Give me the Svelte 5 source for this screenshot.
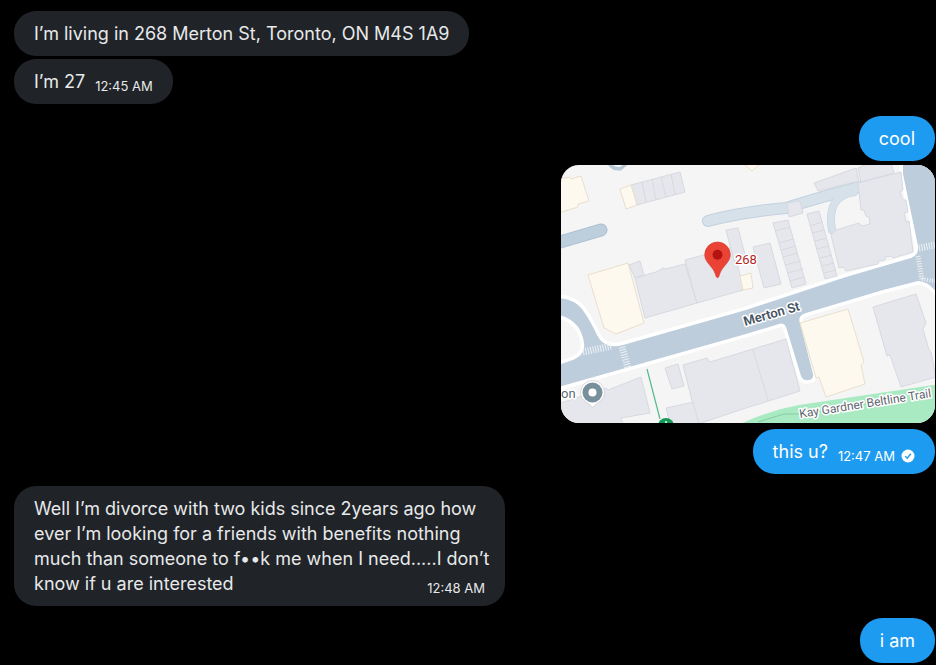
<script lang="ts">
  interface Message {
    id: number;
    from: 'me' | 'them';
    text?: string;
    map?: boolean;
    time?: string;
    sent?: boolean;
    long?: boolean;
  }

  const messages: Message[] = [
    { id: 1, from: 'them', text: 'I’m living in 268 Merton St, Toronto, ON M4S 1A9' },
    { id: 2, from: 'them', text: 'I’m 27', time: '12:45 AM' },
    { id: 3, from: 'me', text: 'cool' },
    { id: 4, from: 'me', map: true },
    { id: 5, from: 'me', text: 'this u?', time: '12:47 AM', sent: true },
    {
      id: 6,
      from: 'them',
      text: 'Well I’m divorce with two kids since 2years ago how ever I’m looking for a friends with benefits nothing much than someone to f••k me when I need.....I don’t know if u are interested',
      time: '12:48 AM',
      long: true,
    },
    { id: 7, from: 'me', text: 'i am' },
  ];

  const grey = [
    'M631 185 680 172 685 192 637 205Z M642 182l4 20 M652 179l4 21 M661 177l5 20 M671 174l4 20',
    'M629 265 640 261 644 275 635 278Z',
    'M635 278 656 272 663 268 666 269 685 264 697 303 645 318Z',
    'M685 260 733 247 740 275 743 290 697 303Z',
    'M726 230 738 228 747 262 735 265Z',
    'M753 247 770 243 781 284 764 288Z',
    'M773 223 788 220 806 284 792 288Z M775 231l15-4 M779 243l14-4 M781 250l15-4 M783 257l15-4 M785 265l16-4 M787 273l16-4 M790 281l14-4',
    'M807 214 819 211 837 276 825 279Z M810 226l12-4 M812 233l12-3 M815 241l12-3 M817 249l12-3 M820 258l12-3 M822 266l12-3 M824 273l12-3',
    'M787 203 800 201 803 213 789 217Z',
    'M814 183 856 168 859 181 818 191Z',
    'M858 168 870 163 891 163 894 173 861 182Z',
    'M858 183 901 172 903 190 900 192 903 200 906 200 908 212 904 213 906 222 909 221 913 252 893 258 891 256 885 257 885 260 878 261 878 264 846 271 843 267 839 268 831 235 836 230 859 223 862 226 870 224 869 217 866 216 864 210 861 210Z',
    'M665 368 678 364 684 386 672 389Z',
    'M683 365 707 358 710 362 786 339 800 391 746 408 698 424Z M753 350 768 400',
    'M666 408 693 402 699 424 670 424Z',
    'M555 405 606 388 608 390 641 377 650 413 621 418 623 424 555 424Z',
    'M873 307 916 294 926 323 923 329 929 350 931 352 936 377 901 387 890 355 887 356Z',
  ];

  const cream = [
    'M555 180 569 177 571 179 581 176 589 201 578 204 578 207 555 214Z',
    'M620 189 631 185 637 205 626 209Z',
    'M588 275 628 263 644 323 616 334 604 328Z',
    'M740 276 751 273 753 288 743 290Z',
    'M800 323 848 309 864 362 861 365 865 384 826 397 819 377 816 378Z',
    'M741 162 752 171 759 165Z',
  ];

  const streets =
    'M555 298 Q573 298 582 309 Q590 320 597 335 Q604 350 623 345 L746 310 846 277 911 258 Q919 255 918 246 L903 174 903 155 945 155 945 308 Q935 282 918 281 L883 290 806 313 Q797 316 800 323 L813 374 Q814 380 808 380 Q803 381 801 376 L787 330 Q785 322 779 324 L746 334 555 388 V366 L570 361 Q586 356 584 343 Q581 319 555 314Z';
</script>

<main class="chat">
  <ol class="thread">
    {#each messages as message (message.id)}
      <li class="row {message.from}">
        {#if message.map}
          <a class="photo" href="#map" aria-label="Map of 268 Merton St">
            <svg viewBox="561 165 374 258" aria-hidden="true">
              <rect x="561" y="165" width="374" height="258" fill="#f5f5f6" />
              <path d="M736 426 Q766 411 799 405 L940 384 V430 H736Z" fill="#a9eac3" />
              <path d="M758 422 784 414 H802 L870 403" fill="none" stroke="#83cda5" />

              <g fill="none" stroke-linecap="round" stroke-linejoin="round">
                <path d="M609 161 Q612 169 620 168 L627 162" stroke="#b7c8d7" stroke-width="5" />
                <path d="M612 161 Q614 166 620 165 L625 161" stroke="#fff" stroke-width="3" />
                <path d="M550 245 601 230" stroke="#acc0d1" stroke-width="13" />
                <path d="M550 245 601 230" stroke="#bdcedd" stroke-width="11" />
                <g stroke="#c3d1de" stroke-width="12">
                  <path d="M708 221 Q742 212 786 208 Q817 198 859 187" />
                  <path d="M854 192 Q826 196 832 230" stroke-width="8" />
                </g>
                <g stroke="#d7e1ea" stroke-width="10">
                  <path d="M708 221 Q742 212 786 208 Q817 198 859 187" />
                  <path d="M854 192 Q826 196 832 230" stroke-width="7" />
                </g>
              </g>

              <path d={streets} fill="#bdcddc" stroke="#fff" stroke-width="7" stroke-linejoin="round" />
              <path d={streets} fill="#bdcddc" />

              <g stroke="#d7d9e0" stroke-width="1">
                {#each grey as d}
                  <path {d} fill="#e6e7ec" />
                {/each}
              </g>
              <g stroke="#e9dfcd" stroke-width="1">
                {#each cream as d}
                  <path {d} fill="#fef9ef" />
                {/each}
              </g>

              <g fill="none" stroke="#edf1f5" stroke-width="7" stroke-dasharray="1 1.5">
                <path d="M583 352 612 346" />
                <path d="M622 347 628 368" />
                <path d="M919 248 935 245" />
                <path d="M918 256 922 280" stroke-width="5" />
                <path d="M922 279 935 281" stroke-width="4" />
              </g>

              <path d="M647 369 660 419" stroke="#57b88b" stroke-width="1.2" />
              <circle cx="666" cy="426" r="8" fill="#159957" />
              <circle cx="666" cy="422" r="1" fill="#fff" />

              <path
                d="M592.500 380.500a12 12 0 0 1 12 12c0 8-8 10-12 15c-4-5-12-7-12-15a12 12 0 0 1 12-12Z"
                fill="#fff"
                stroke="#c9ccd0"
                stroke-width=".7"
              />
              <circle cx="592.500" cy="392.500" r="10" fill="#78909c" />
              <circle cx="592.500" cy="392.500" r="4" fill="#fff" />

              <path
                d="M717.500 242a12.800 12.800 0 0 1 12.800 12.800c0 8-8.300 11-11 20.200c-.7 3.500-2.900 3.500-3.600 0c-2.700-9.200-11-12.200-11-20.200a12.800 12.800 0 0 1 12.800-12.800Z"
                fill="#ea4335"
                stroke="#d2392d"
                stroke-width=".6"
              />
              <circle cx="717.500" cy="254.800" r="5" fill="#b31412" />

              <text class="label place" x="735" y="264">268</text>
              <text class="label poi" x="561" y="398">on</text>
              <text class="label street" transform="translate(745 326) rotate(-16)">Merton St</text>
              <text class="label trail" transform="translate(800 418) rotate(-9)">Kay Gardner Beltline Trail</text>
            </svg>
          </a>
        {:else}
          <p class="bubble" class:long={message.long}>
            {message.text}
            {#if message.time}
              <span class="meta">
                <time>{message.time}</time>
                {#if message.sent}
                  <svg class="check" viewBox="0 0 14 14" role="img" aria-label="Sent">
                    <circle cx="7" cy="7" r="6.500" fill="#fff" />
                    <path d="M4.200 7.300 6.200 9.200 9.800 4.800" fill="none" stroke="#1d9bf0" stroke-width="1.400" />
                  </svg>
                {/if}
              </span>
            {/if}
          </p>
        {/if}
      </li>
    {/each}
  </ol>
</main>

<style>
  :global(body) {
    background: #000;
  }

  .chat {
    padding: 11px 1px 2px 14px;
    font-family: Inter, Roboto, sans-serif;
    font-size: 18px;
    line-height: 25px;
    color: #e7e9ea;
  }

  .thread {
    display: flex;
    flex-direction: column;
    margin: 0;
    padding: 0;
    list-style: none;
  }

  .row {
    display: flex;
    margin-top: 3px;
  }

  .row:first-child {
    margin-top: 0;
  }

  .me {
    justify-content: flex-end;
    color: #fff;
  }

  .me + .me {
    margin-top: 4px;
  }

  .them + .me,
  .me + .them {
    margin-top: 12px;
  }

  .bubble {
    display: flow-root;
    box-sizing: border-box;
    max-width: 491px;
    margin: 0;
    padding: 10px 20px;
    border-radius: 22px;
    background: #202327;
  }

  .me .bubble {
    background: #1d9bf0;
  }

  .meta {
    float: right;
    display: flex;
    align-items: center;
    gap: 6px;
    margin: 9px 0 0 10px;
    font-size: 13px;
    line-height: 16px;
  }

  /* wrapped text may run closer to the edge than the timestamp */
  .long {
    padding-right: 10px;
  }

  .long .meta {
    margin-right: 10px;
  }

  .check {
    width: 14px;
    height: 14px;
  }

  .photo {
    display: block;
    width: 374px;
    max-width: 100%;
    margin-bottom: 2px;
    border-radius: 18px;
    overflow: hidden;
  }

  .photo svg {
    display: block;
    width: 100%;
  }

  .label {
    font-family: Roboto, sans-serif;
    font-size: 13px;
    stroke: #fff;
    stroke-width: 3px;
    stroke-linejoin: round;
    paint-order: stroke;
  }

  .place {
    fill: #b3261e;
  }

  .poi {
    fill: #5b6b73;
  }

  .street {
    font-weight: 600;
    fill: #48535f;
  }

  .trail {
    font-size: 12px;
    fill: #5f6670;
  }
</style>
